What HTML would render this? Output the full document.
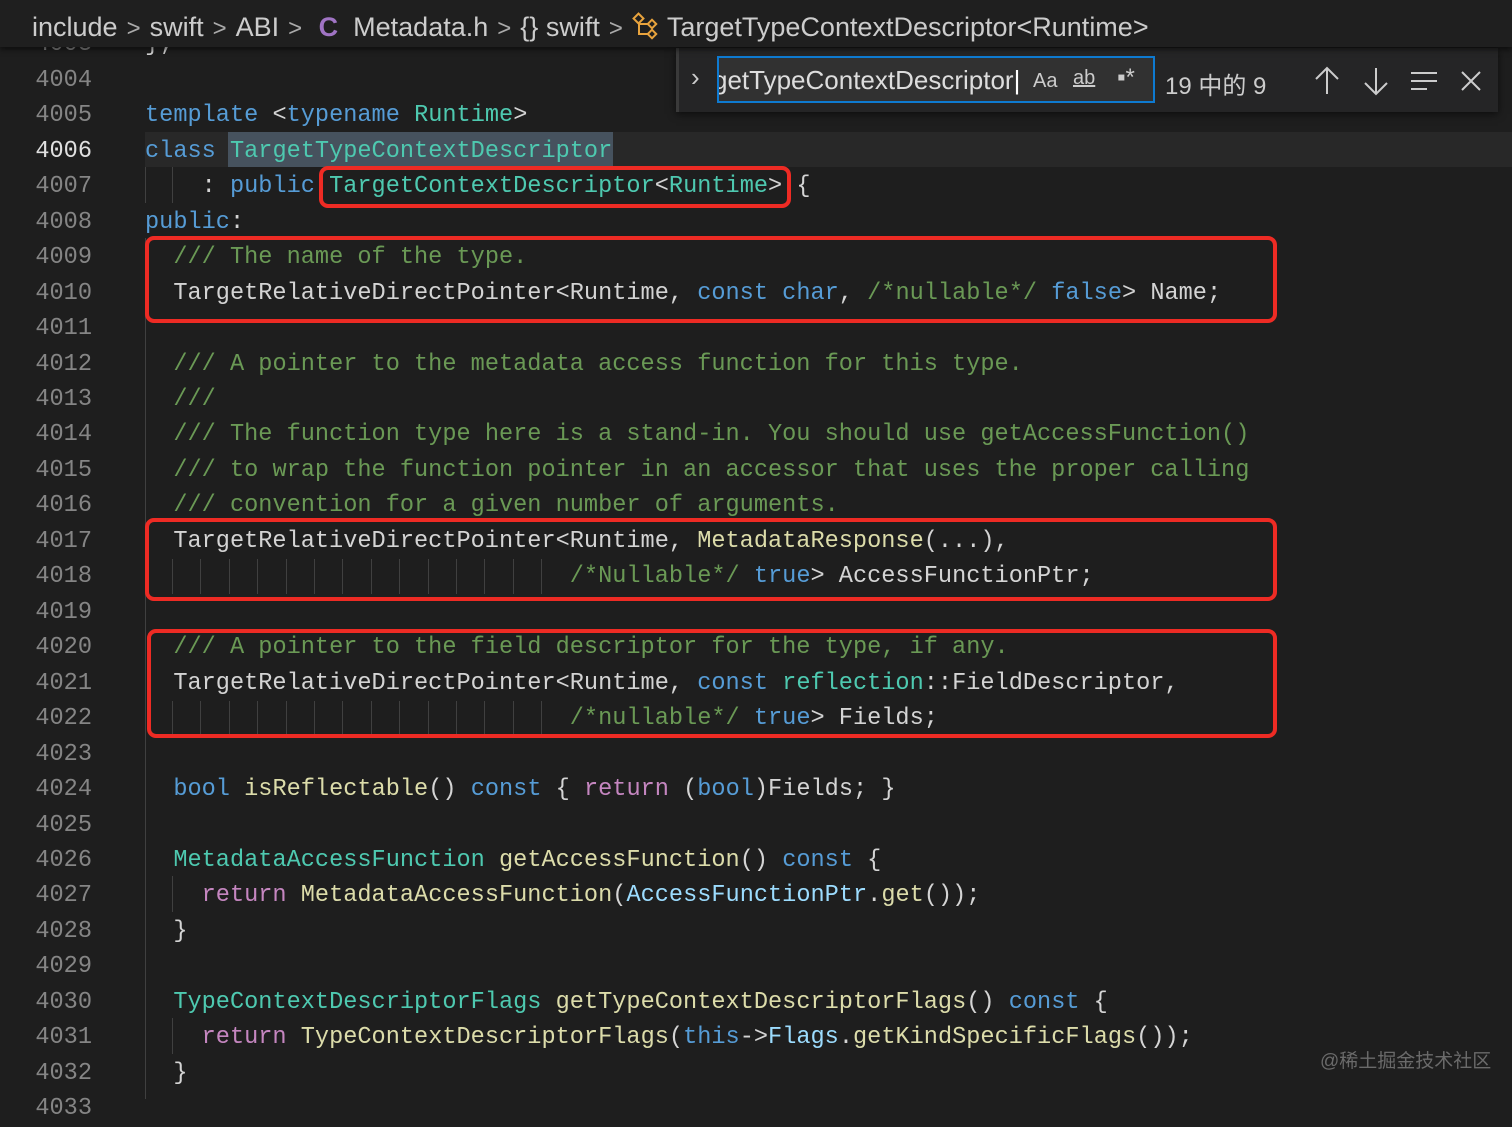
<!DOCTYPE html>
<html><head><meta charset="utf-8"><style>
*{margin:0;padding:0;box-sizing:border-box}
body{width:1512px;height:1099px;background:#1e1e1e;overflow:hidden;position:relative;font-family:"Liberation Mono",monospace}
.ln{position:absolute;left:0;width:92px;text-align:right;color:#858585;font-size:23.6px;line-height:35.46px;height:35.46px;font-family:"Liberation Mono",monospace}
.cl{position:absolute;left:145px;white-space:pre;color:#d4d4d4;font-size:23.6px;line-height:35.46px;height:35.46px}
.k{color:#569cd6}.t{color:#4ec9b0}.c{color:#6a9955}.f{color:#dcdcaa}.p{color:#c586c0}.v{color:#9cdcfe}
.g{position:absolute;width:1px;background:#404040}
.box{position:absolute;border:4px solid #ee2b24;border-radius:9px}
#bc{position:absolute;left:0;top:0;width:1512px;height:47px;background:#1f1f1f;box-shadow:0 3px 5px rgba(0,0,0,.5);font-family:"Liberation Sans",sans-serif;font-size:27px;color:#cccccc;line-height:54px;white-space:pre;padding-left:32px;z-index:5}
#bc .s{color:#aaa;margin:0 9px;font-size:24px}
#fw{position:absolute;left:676px;top:48px;width:822px;height:64px;background:#252526;box-shadow:0 2px 8px rgba(0,0,0,.6);border-left:3px solid #3a3a3a;z-index:4;font-family:"Liberation Sans",sans-serif;color:#cccccc}
</style></head><body>
<div id="bc">include<span class="s">&gt;</span>swift<span class="s">&gt;</span>ABI<span class="s">&gt;</span> <span style="color:#a074c4;font-weight:bold">C</span>  Metadata.h<span class="s">&gt;</span>{} swift<span class="s">&gt;</span><svg width="28" height="28" viewBox="0 0 28 28" style="vertical-align:-4px" fill="none" stroke="#e8a33d" stroke-width="2"><rect x="3" y="3" width="7" height="7" transform="rotate(45 6.5 6.5)"/><rect x="17" y="9" width="6" height="6" transform="rotate(45 20 12)"/><rect x="17" y="19" width="6" height="6" transform="rotate(45 20 22)"/><path d="M7 11V22H16M7 12H16"/></svg> TargetTypeContextDescriptor&lt;Runtime&gt;</div>

<div id="fw">
<div style="position:absolute;left:12px;top:14px;font-size:26px">›</div>
<div style="position:absolute;left:38px;top:8px;width:438px;height:47px;border:2px solid #0e7ad1;background:#313131;overflow:hidden">
<span style="position:absolute;left:-6px;top:7px;font-size:26px;white-space:nowrap;color:#ddd">getTypeContextDescriptor<span style="color:#fff">|</span></span>
<span style="position:absolute;left:314px;top:12px;font-size:20px">Aa</span>
<span style="position:absolute;left:354px;top:9px;font-size:20px;text-decoration:underline">ab</span>
<span style="position:absolute;left:398px;top:6px;font-size:24px">▪*</span>
</div>
<div style="position:absolute;left:486px;top:18px;font-size:24px;font-family:'Liberation Sans','Noto Sans CJK SC',sans-serif">19 中的 9</div>
<svg style="position:absolute;left:630px;top:18px" width="180" height="30" stroke="#ccc" stroke-width="2" fill="none">
<path d="M18 2V28M7 13L18 2L29 13"/>
<path d="M67 2V28M56 17L67 28L78 17"/>
<path d="M102 7H128M102 15H128M102 23H118"/>
<path d="M153 6L171 24M171 6L153 24"/>
</svg>
</div>

<div style="position:absolute;left:145px;top:132px;width:1367px;height:35px;background:#282828"></div>
<div style="position:absolute;left:228px;top:132px;width:385px;height:35px;background:#46525e"></div>

<div class="g" style="left:145px;top:167px;height:36px"></div>
<div class="g" style="left:172px;top:167px;height:36px"></div>
<div class="g" style="left:145px;top:238px;height:861px"></div>
<div class="g" style="left:172px;top:876px;height:36px"></div>
<div class="g" style="left:172px;top:1018px;height:36px"></div>

<div id="code"></div>
<div class="box" style="left:319px;top:166px;width:472px;height:42px"></div>
<div class="box" style="left:145px;top:236px;width:1132px;height:87px"></div>
<div class="box" style="left:145px;top:518px;width:1132px;height:83px"></div>
<div class="box" style="left:147px;top:629px;width:1130px;height:109px"></div>

<div style="position:absolute;left:1320px;top:1046px;font-family:'Liberation Sans','Noto Sans CJK SC',sans-serif;font-size:19px;color:#6a6a6a">@稀土掘金技术社区</div>

<script>
const L=[
['4003','<span>};</span>'],
['4004',''],
['4005','<span class="k">template</span> &lt;<span class="k">typename</span> <span class="t">Runtime</span>&gt;'],
['4006','<span class="k">class</span> <span class="t">TargetTypeContextDescriptor</span>'],
['4007','    : <span class="k">public</span> <span class="t">TargetContextDescriptor</span>&lt;<span class="t">Runtime</span>&gt; {'],
['4008','<span class="k">public</span>:'],
['4009','  <span class="c">/// The name of the type.</span>'],
['4010','  TargetRelativeDirectPointer&lt;Runtime, <span class="k">const</span> <span class="k">char</span>, <span class="c">/*nullable*/</span> <span class="k">false</span>&gt; Name;'],
['4011',''],
['4012','  <span class="c">/// A pointer to the metadata access function for this type.</span>'],
['4013','  <span class="c">///</span>'],
['4014','  <span class="c">/// The function type here is a stand-in. You should use getAccessFunction()</span>'],
['4015','  <span class="c">/// to wrap the function pointer in an accessor that uses the proper calling</span>'],
['4016','  <span class="c">/// convention for a given number of arguments.</span>'],
['4017','  TargetRelativeDirectPointer&lt;Runtime, <span class="f">MetadataResponse</span>(...),'],
['4018','                              <span class="c">/*Nullable*/</span> <span class="k">true</span>&gt; AccessFunctionPtr;'],
['4019',''],
['4020','  <span class="c">/// A pointer to the field descriptor for the type, if any.</span>'],
['4021','  TargetRelativeDirectPointer&lt;Runtime, <span class="k">const</span> <span class="t">reflection</span>::FieldDescriptor,'],
['4022','                              <span class="c">/*nullable*/</span> <span class="k">true</span>&gt; Fields;'],
['4023',''],
['4024','  <span class="k">bool</span> <span class="f">isReflectable</span>() <span class="k">const</span> { <span class="p">return</span> (<span class="k">bool</span>)Fields; }'],
['4025',''],
['4026','  <span class="t">MetadataAccessFunction</span> <span class="f">getAccessFunction</span>() <span class="k">const</span> {'],
['4027','    <span class="p">return</span> <span class="f">MetadataAccessFunction</span>(<span class="v">AccessFunctionPtr</span>.<span class="f">get</span>());'],
['4028','  }'],
['4029',''],
['4030','  <span class="t">TypeContextDescriptorFlags</span> <span class="f">getTypeContextDescriptorFlags</span>() <span class="k">const</span> {'],
['4031','    <span class="p">return</span> <span class="f">TypeContextDescriptorFlags</span>(<span class="k">this</span>-&gt;<span class="v">Flags</span>.<span class="f">getKindSpecificFlags</span>());'],
['4032','  }'],
['4033','']
];
let h='';
L.forEach((r,i)=>{const top=(62.8+35.46*(i-1)).toFixed(1);
h+=`<div class="ln" style="top:${top}px;${r[0]=='4006'?'color:#e0e0e0':''}">${r[0]}</div><div class="cl" style="top:${top}px">${r[1]}</div>`;
if(r[0]=='4018'||r[0]=='4022'){for(let k=0;k<14;k++)h+=`<div class="g" style="left:${(172+28.4*k).toFixed(0)}px;top:${top}px;height:35px"></div>`;}
});
document.getElementById('code').innerHTML=h;
</script>
</body></html>
